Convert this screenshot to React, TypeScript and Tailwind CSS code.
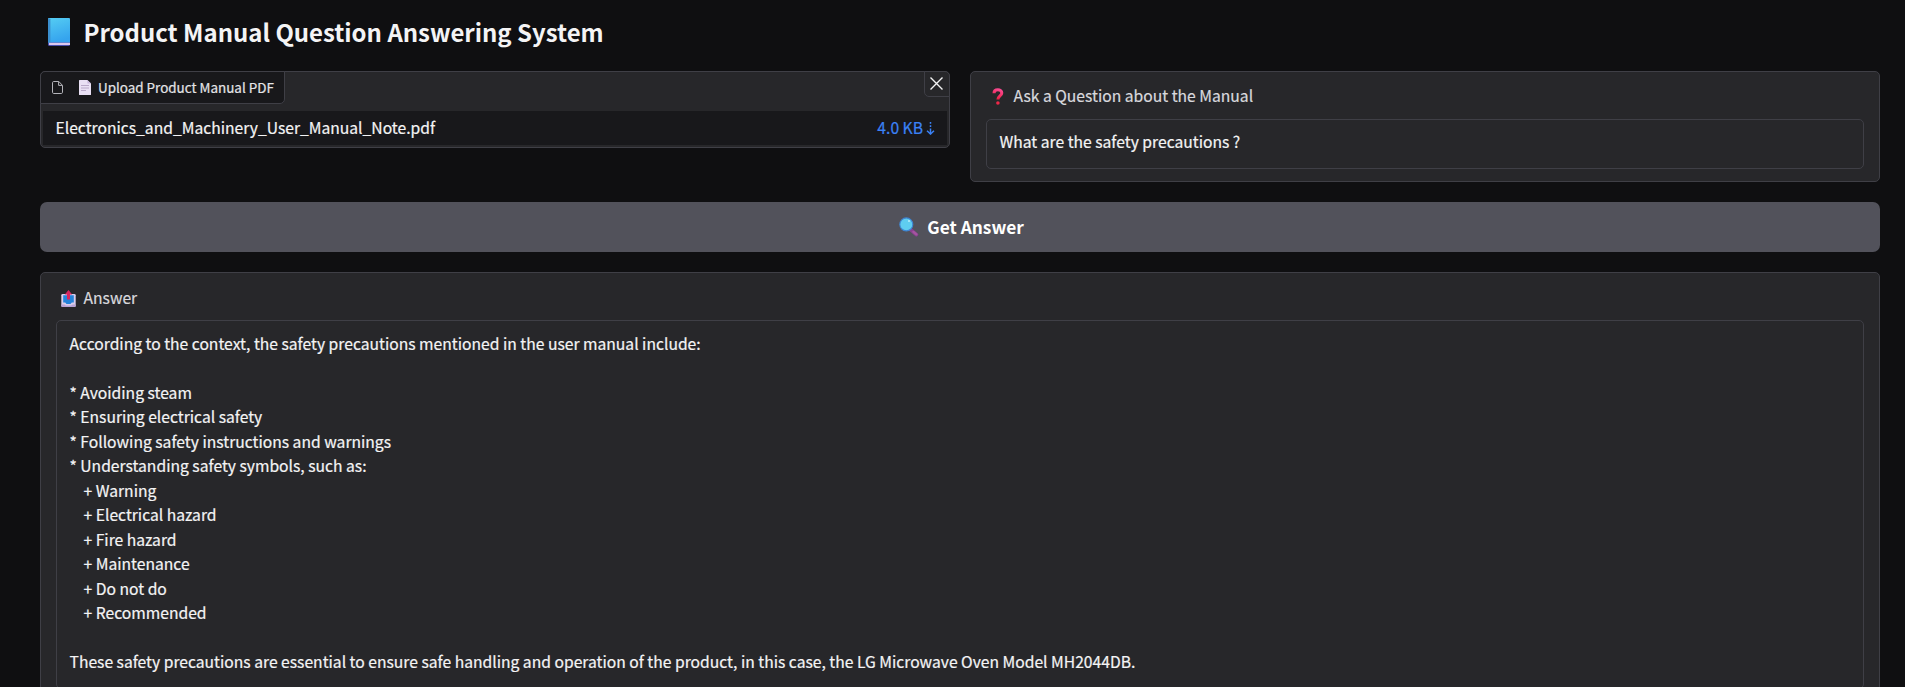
const answer = `According to the context, the safety precautions mentioned in the user manual include:

* Avoiding steam
* Ensuring electrical safety
* Following safety instructions and warnings
* Understanding safety symbols, such as:
    + Warning
    + Electrical hazard
    + Fire hazard
    + Maintenance
    + Do not do
    + Recommended

These safety precautions are essential to ensure safe handling and operation of the product, in this case, the LG Microwave Oven Model MH2044DB.`;

function BookIcon() {
  return (
    <svg className="h-7 w-[22px] shrink-0" viewBox="0 0 22 28">
      <defs>
        <linearGradient id="cover" x1="0" y1="0" x2="0.3" y2="1">
          <stop offset="0" stopColor="#55cdf3" />
          <stop offset="1" stopColor="#35a4ee" />
        </linearGradient>
      </defs>
      <rect x="0" y="0" width="22" height="28" rx="1.6" fill="#4a4fae" />
      <rect x="0" y="0" width="22" height="24.6" rx="1.2" fill="url(#cover)" />
      <rect x="0" y="0.5" width="2.4" height="24.3" rx="0.8" fill="#3a8fce" />
      <rect x="1" y="24.8" width="21" height="2.2" fill="#dcc8ee" />
    </svg>
  );
}

function FileIcon() {
  return (
    <svg className="h-[13px] w-[11px] shrink-0" viewBox="0 0 11 13" fill="none" stroke="#b4b4ba" strokeWidth="1" strokeLinejoin="round">
      <path d="M6.8 0.5H1.7C1 0.5 0.5 1 0.5 1.7v9.6c0 .7.5 1.2 1.2 1.2h7.6c.7 0 1.2-.5 1.2-1.2V4.4z" />
      <path d="M6.6 0.6v3.8h3.8" />
    </svg>
  );
}

function PageIcon() {
  return (
    <svg className="h-[15px] w-3 shrink-0" viewBox="0 0 12 15">
      <path d="M0.6 0H8.4L12 3.6V14.4a.6.6 0 0 1-.6.6H.6a.6.6 0 0 1-.6-.6V.6A.6.6 0 0 1 .6 0z" fill="#e9e0f4" />
      <path d="M8.4 0L12 3.6H9a.6.6 0 0 1-.6-.6z" fill="#c9b8dc" />
      <path d="M2 5.5h8M2 8h8M2 10.5h5" stroke="#b3a3c4" strokeWidth="0.9" />
    </svg>
  );
}

function QuestionIcon() {
  return (
    <svg className="h-[17px] w-3 shrink-0" viewBox="0 0 12 17">
      <defs>
        <linearGradient id="mark" x1="0.7" y1="0" x2="0.4" y2="1">
          <stop offset="0" stopColor="#f9488f" />
          <stop offset="1" stopColor="#ee1f3f" />
        </linearGradient>
      </defs>
      <path d="M2 5.2C2 3 3.7 1.7 5.9 1.7s3.9 1.3 3.9 3.3c0 2.9-3.9 3.1-3.9 6.6" fill="none" stroke="url(#mark)" strokeWidth="3" />
      <circle cx="5.9" cy="15" r="1.8" fill="#ee2748" />
    </svg>
  );
}

function SearchIcon() {
  return (
    <svg className="h-5 w-5 shrink-0" viewBox="0 0 20 20">
      <path d="M11.6 12.6L17.4 17.6" stroke="#8a4192" strokeWidth="3.6" strokeLinecap="round" />
      <path d="M14.4 14.8L17.4 17.4" stroke="#a5559f" strokeWidth="2.2" strokeLinecap="round" />
      <circle cx="7.3" cy="7.4" r="6.5" fill="#5fcdf0" stroke="#3f86d2" strokeWidth="1.1" />
      <circle cx="10" cy="4" r="1" fill="#b8ecfb" />
    </svg>
  );
}

function OutboxIcon() {
  return (
    <svg className="h-[17px] w-[15px] shrink-0" viewBox="0 0 15 17">
      <rect x="0.3" y="4" width="14.4" height="13" rx="1.3" fill="#d9cdec" />
      <path d="M2.2 5.2h10.6v7.2h-2l-1.3 1.6h-4l-1.3-1.6h-2z" fill="#2583da" />
      <path d="M.3 14.4h3.2l1.4 1.2h5.2l1.4-1.2h3.2v1.4a1.2 1.2 0 0 1-1.2 1.2H1.5a1.2 1.2 0 0 1-1.2-1.2z" fill="#b9a3d6" />
      <path d="M7.5 0l3.7 4.6H9v5H6v-5H3.8z" fill="#d8265f" />
    </svg>
  );
}

function DownloadArrow() {
  return (
    <svg className="h-[13px] w-[9px] shrink-0" viewBox="0 0 9 13" fill="none" stroke="#3b82f6" strokeWidth="1.5">
      <path d="M4.5 0v1.8M4.5 3.2v1.8M4.5 6.4v5.8" />
      <path d="M1 8.8l3.5 3.2 3.5-3.2" />
    </svg>
  );
}

export default function App() {
  return (
    <main className="flex h-[687px] flex-col overflow-hidden bg-[#0f0f11] pr-[25px] pl-10 font-['Noto_Sans_CJK_SC',sans-serif] text-[15.67px] leading-[24.5px] text-[#f4f4f5] [-webkit-text-stroke:0.2px]">
      <h1 className="flex h-[71px] shrink-0 items-start gap-[13.5px] pt-[18px] pl-2 text-[23.95px] font-semibold [-webkit-text-stroke:0px]">
        <BookIcon />
        <span className="-mt-px leading-[30px] whitespace-pre">Product Manual Question Answering System</span>
      </h1>

      <div className="grid grid-cols-2 items-start gap-5">
        <section className="flex h-[77px] flex-col rounded-[5px] border border-[#3f3f46] bg-[#27272a]">
          <div className="flex items-start justify-between">
            <div className="-mt-px -ml-px flex h-[33px] w-[245px] items-center rounded-tl-[5px] rounded-br-[5px] border border-[#3f3f46] bg-[#18181b] pl-[11px] text-[13.43px] text-[#e4e4e7]">
              <FileIcon />
              <span className="flex items-center pl-4">
                <PageIcon />
                <span className="pb-px pl-[7px] leading-5 whitespace-nowrap">Upload Product Manual PDF</span>
              </span>
            </div>
            <button aria-label="Clear" className="-mt-px -mr-px flex h-[26px] w-[26px] items-center justify-center rounded-tr-[5px] rounded-bl-[5px] border border-[#3f3f46] bg-[#27272a] pr-px pb-px">
              <svg className="h-[13px] w-[13px]" viewBox="0 0 13 13" stroke="#f4f4f5" strokeWidth="1.4">
                <path d="M.5.5l12 12M12.5.5l-12 12" />
              </svg>
            </button>
          </div>
          <div className="mx-0.5 mt-[7px] flex h-[34px] items-center justify-between bg-[#18181b] pr-3 pl-[12.5px]">
            <span>Electronics_and_Machinery_User_Manual_Note.pdf</span>
            <span className="flex items-center gap-[3px] text-[#3b82f6]">
              4.0 KB
              <DownloadArrow />
            </span>
          </div>
        </section>

        <section className="flex h-[111px] flex-col rounded-[5px] border border-[#3f3f46] bg-[#27272a] px-[15px] pt-3">
          <div className="flex items-center pl-[6px] text-[#d9d9de]">
            <QuestionIcon />
            <span className="pl-[9.5px]">Ask a Question about the Manual</span>
          </div>
          <div className="mt-[10.5px] h-[50px] rounded-[5px] border border-[#3f3f46] pt-[10px] pl-[12.5px]">
            What are the safety precautions ?
          </div>
        </section>
      </div>

      <button className="mt-5 flex h-[50px] shrink-0 items-center justify-center gap-[8px] rounded-[7px] bg-[#52525b] pl-[3px] text-[17.3px] font-semibold text-white [-webkit-text-stroke:0px]">
        <SearchIcon />
        <span>Get Answer</span>
      </button>

      <section className="mt-5 flex h-[435px] shrink-0 flex-col rounded-t-[5px] border border-[#3f3f46] bg-[#27272a] px-[15px] pt-[13px]">
        <div className="flex items-center pl-[5px] text-[#d9d9de]">
          <OutboxIcon />
          <span className="pl-[7.5px]">Answer</span>
        </div>
        <div className="mt-[9.5px] h-[369px] rounded-[5px] border border-[#3f3f46] pt-[10.5px] pl-[12.5px] whitespace-pre">
          {answer}
        </div>
      </section>
    </main>
  );
}
